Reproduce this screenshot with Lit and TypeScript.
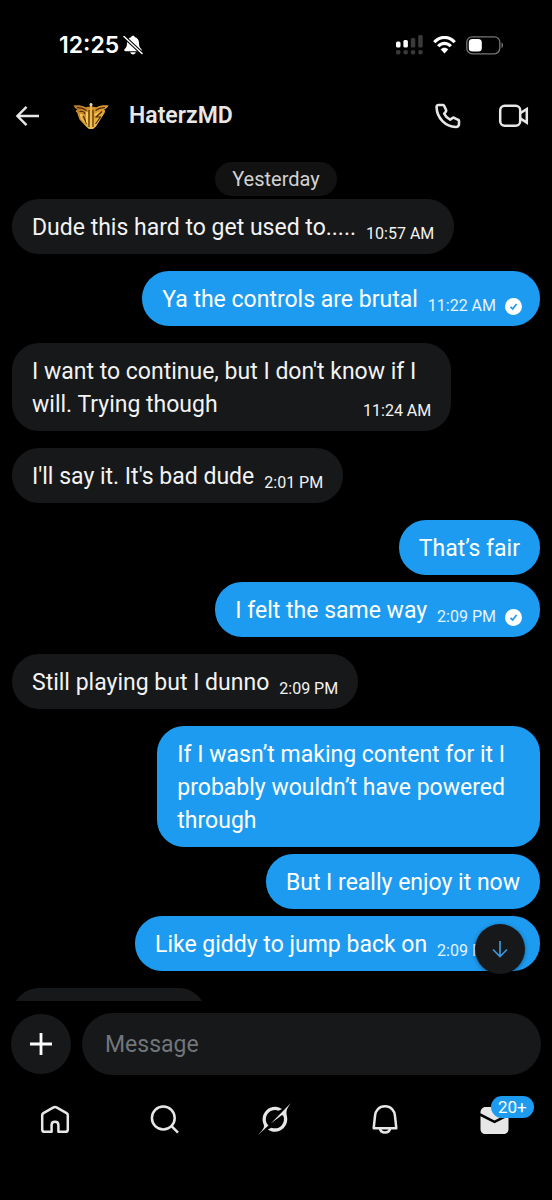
import { LitElement, html, css, svg, nothing } from "lit";
import { customElement, property } from "lit/decorators.js";
import { classMap } from "lit/directives/class-map.js";

interface Message {
  lines: string[];
  mine?: boolean;
  time?: string;
  seen?: boolean;
  joined?: boolean;
}

const MESSAGES: Message[] = [
  { lines: ["Dude this hard to get used to....."], time: "10:57 AM" },
  { lines: ["Ya the controls are brutal"], time: "11:22 AM", mine: true, seen: true },
  { lines: ["I want to continue, but I don't know if I", "will. Trying though"], time: "11:24 AM" },
  { lines: ["I'll say it. It's bad dude"], time: "2:01 PM" },
  { lines: ["That’s fair"], mine: true },
  { lines: ["I felt the same way"], time: "2:09 PM", mine: true, seen: true, joined: true },
  { lines: ["Still playing but I dunno"], time: "2:09 PM" },
  { lines: ["If I wasn’t making content for it I", "probably wouldn’t have powered", "through"], mine: true },
  { lines: ["But I really enjoy it now"], mine: true, joined: true },
  { lines: ["Like giddy to jump back on"], time: "2:09 PM", mine: true, seen: true, joined: true },
];

@customElement("status-bar")
export class StatusBar extends LitElement {
  static styles = css`
    :host {
      display: flex;
      justify-content: space-between;
      align-items: center;
      height: 90px;
      box-sizing: border-box;
      padding: 0 48px 0 59px;
      color: #fff;
      font: 600 23px/26px Inter, sans-serif;
    }
    .clock, .system { display: flex; align-items: center; }
    .clock { gap: 4px; }
    .system { gap: 10px; }
    svg { display: block; }
  `;
  render() {
    return html`
      <div class="clock">
        <span>12:25</span>
        <svg width="20" height="20" viewBox="0 0 20 20">
          <path fill="#fff" d="M10 .8c-1 0-1.600.6-1.800 1.300C5.400 3 4 5.200 4 8c0 3.600-.9 4.600-2.300 6-.9.9-.4 2.200.8 2.200h15c1.200 0 1.700-1.300.8-2.200C16.900 12.600 16 11.600 16 8c0-2.800-1.400-5-4.200-5.900C11.600 1.400 11 .8 10 .8zM7.200 17.300c.4 1.300 1.400 2.100 2.800 2.100s2.400-.8 2.800-2.100z"/>
          <path stroke="#000" stroke-width="3.600" d="M1 1.500 18.500 18"/>
          <path stroke="#fff" stroke-width="1.500" stroke-linecap="round" d="M1 1.500 19 18.500"/>
        </svg>
      </div>
      <div class="system">
        <svg width="27" height="20" viewBox="0 0 27 20">
          <g fill="#fff"><rect y="6.500" width="4.500" height="6" rx="1.500"/><rect x="7.400" y="5" width="4.500" height="7.500" rx="1.500"/></g>
          <g fill="#3a3a3a"><rect x="14.800" y="3" width="4.500" height="9.500" rx="1.500"/><rect x="22.200" width="4.500" height="12.500" rx="1.500"/>
          <rect y="15" width="4.500" height="4.500" rx="2"/><rect x="7.400" y="15" width="4.500" height="4.500" rx="2"/><rect x="14.800" y="15" width="4.500" height="4.500" rx="2"/><rect x="22.200" y="15" width="4.500" height="4.500" rx="2"/></g>
        </svg>
        <svg width="23" height="18" viewBox="0 0 23 18" fill="none" stroke="#fff" stroke-width="3.200">
          <path d="M1.300 6.200C7-.2 16-.2 21.700 6.200"/>
          <path d="M5.200 10.300c3.600-4 9-4 12.600 0"/>
          <path fill="#fff" stroke="none" d="M11.500 17.400 7.600 13.300c2.200-2.200 5.600-2.200 7.800 0z"/>
        </svg>
        <svg width="38" height="19" viewBox="0 0 38 19">
          <rect x=".8" y=".8" width="33" height="17" rx="5.500" fill="none" stroke="#767676" stroke-width="1.300"/>
          <rect x="2.800" y="3" width="13" height="12.600" rx="3.500" fill="#fff"/>
          <path fill="#767676" d="M35.500 6.500c2 .8 2 4.800 0 5.600z"/>
        </svg>
      </div>`;
  }
}

@customElement("chat-header")
export class ChatHeader extends LitElement {
  static styles = css`
    :host {
      display: flex;
      align-items: center;
      box-sizing: border-box;
      height: 50px;
      padding: 2px 22px 0 14px;
      color: #e7e7e7;
    }
    button {
      display: block;
      padding: 0;
      border: 0;
      background: none;
      color: inherit;
    }
    svg { display: block; }
    .avatar { margin-left: 31px; }
    h1 {
      flex: 1;
      margin: 0 0 0 20px;
      font: 600 23px/28px Roboto, sans-serif;
    }
    .calls { display: flex; align-items: center; gap: 36px; }
  `;
  render() {
    return html`
      <button aria-label="Back">
        <svg width="28" height="28" viewBox="0 0 28 28" fill="none" stroke="currentColor" stroke-width="2.400">
          <path d="M25 14H4M12.500 4.800 3.400 14l9.100 9.200"/>
        </svg>
      </button>
      <svg class="avatar" width="36" height="28" viewBox="0 0 36 28">
        <defs><linearGradient id="gold" x1="0" y1="0" x2="1" y2="1">
          <stop offset="0" stop-color="#b4762a"/><stop offset=".5" stop-color="#d99a2c"/><stop offset=".75" stop-color="#f0bd50"/><stop offset="1" stop-color="#8d5416"/>
        </linearGradient></defs>
        <path fill="url(#gold)" d="M.5 3.500C5 3 9 3.500 12.500 5.200L17 4.500V2h2v2.500l4.500.7C27 3.500 31 3 35.500 3.500 34.500 5.500 33 7 31 7.800c1.500.7 1.200 1.700.5 3.200L23 24.500 20 27h-4l-3-2.500-6.500-7L4 10.500C2 9.500 3 8 4.500 7.500 2.500 6.500 1.200 5.200.500 3.500z"/>
        <path fill="none" stroke="#4a2809" stroke-width="1.100" d="M4 5.600c4-.2 7 .9 9.500 2.900M32 5.600c-4-.2-7 .9-9.500 2.900M6.500 9.500c2.500-.5 5 .5 5.500 2.500M29 9.500l-6 5.500h4.500l-5 7M16 8v17M20 8v17M10.500 14l3 8"/>
        <path fill="#f6c95a" d="m6.500 11.500 3.500 1-1.500 3 5 6.500-5.500-5zM21 12l6-2.500-4.500 4.500zM13 10h2v13l-2-3zM17.300 1.500h1.400V25h-1.400z"/>
        <circle cx="18" cy="2.500" r="1.500" fill="#e9d9b0"/>
      </svg>
      <h1>HaterzMD</h1>
      <div class="calls">
        <button aria-label="Audio call">
          <svg width="28" height="28" viewBox="0 0 28 28" fill="none" stroke="currentColor" stroke-width="2.600" stroke-linejoin="round">
            <path d="M4.200 3h4.600c.6 0 1 .3 1.300.8l2 4.200c.2.500.1 1-.2 1.400l-1.700 2.400c1.300 2.700 3.200 4.600 5.900 5.900l2.600-1.800c.4-.3.900-.3 1.400-.1l4.100 2c.5.200.8.700.8 1.200v3c0 2-1.300 3.100-3.200 3C11.500 24.500 3 16.300 2.600 5.400 2.500 4.200 3 3.200 4.200 3z"/>
          </svg>
        </button>
        <button aria-label="Video call">
          <svg width="32" height="28" viewBox="0 0 32 28" fill="none" stroke="currentColor" stroke-width="2.500">
            <rect x="2.200" y="3.800" width="20" height="20" rx="4.500"/>
            <path d="M22.200 11.200 28.800 7v13.600l-6.600-4.200"/>
          </svg>
        </button>
      </div>`;
  }
}

@customElement("chat-bubble")
export class ChatBubble extends LitElement {
  @property({ attribute: false }) message!: Message;
  static styles = css`
    :host { display: flex; }
    .bubble {
      box-sizing: border-box;
      min-height: 55px;
      padding: 12px 20px 10px;
      border-radius: 27px;
      background: #16181a;
      color: #f2f2f2;
      font: 400 23px/33px Roboto, sans-serif;
    }
    .mine { margin-left: auto; background: #1d9bf0; color: #fff; }
    .seen { padding-right: 18px; }
    .line { display: flex; justify-content: space-between; gap: 10px; white-space: nowrap; }
    .multi .text { padding-right: 15px; }
    .meta {
      display: flex;
      align-items: center;
      align-self: flex-end;
      gap: 9px;
      height: 20px;
      font-size: 16px;
      line-height: 20px;
    }
    .seen .meta { color: #e3f3ff; }
    svg { display: block; }
  `;
  render() {
    const m = this.message;
    const last = m.lines.length - 1;
    return html`<div class=${classMap({ bubble: true, mine: !!m.mine, seen: !!m.seen, multi: last > 0 })}>
      ${m.lines.map((text, i) => html`<div class="line">
        <span class="text">${text}</span>
        ${i === last && m.time ? html`<span class="meta"><time>${m.time}</time>${m.seen ? this.tick() : nothing}</span>` : nothing}
      </div>`)}
    </div>`;
  }
  private tick() {
    return html`<svg width="17" height="17" viewBox="0 0 17 17" role="img" aria-label="Seen">
      <circle cx="8.500" cy="8.500" r="8.500" fill="#fff"/>
      <path d="m5.500 8.800 2.200 2.200 3.800-5" fill="none" stroke="#1d9bf0" stroke-width="1.700"/>
    </svg>`;
  }
}

@customElement("chat-composer")
export class ChatComposer extends LitElement {
  static styles = css`
    :host { display: flex; align-items: center; gap: 11px; padding: 12px 11px 0; }
    button {
      display: grid;
      place-items: center;
      flex: none;
      width: 60px;
      height: 60px;
      padding: 0;
      border: 0;
      border-radius: 50%;
      background: #16181a;
      color: #fff;
    }
    label { display: flex; flex: 1; min-width: 0; }
    input {
      flex: 1;
      min-width: 0;
      height: 62px;
      box-sizing: border-box;
      padding: 0 23px;
      border: 0;
      border-radius: 31px;
      outline: 0;
      background: #16181a;
      color: #f2f2f2;
      font: 400 23px/33px Roboto, sans-serif;
    }
    input::placeholder { color: #71767b; opacity: 1; }
  `;
  render() {
    return html`
      <button aria-label="Add attachment">
        <svg width="24" height="24" viewBox="0 0 24 24" fill="none" stroke="currentColor" stroke-width="2.800"><path d="M12 1v22M1 12h22"/></svg>
      </button>
      <label><input type="text" placeholder="Message" aria-label="Message" /></label>`;
  }
}

const NAV = [
  { label: "Home", icon: svg`<path fill="none" stroke="currentColor" stroke-width="2.500" stroke-linejoin="round" d="M14.500 5.300 4.400 11.100c-.8.500-1.200 1.200-1.200 2.100v14.200c0 1.400 1 2.400 2.400 2.400h7V23c0-4.300 6.800-4.300 6.800 0v6.800h7c1.400 0 2.400-1 2.400-2.400V13.200c0-.9-.4-1.600-1.200-2.100L17.500 5.300c-1.100-.6-1.900-.6-3 0z"/>` },
  { label: "Search", icon: svg`<g fill="none" stroke="currentColor" stroke-width="2.500"><circle cx="14.300" cy="16" r="11.400"/><path d="m22.500 24.200 6.500 6.500"/></g>` },
  { label: "Grok", icon: svg`<path fill="currentColor" d="M11.745 21.540l10.970-8.190c.539-.4 1.307-.244 1.564.38 1.349 3.288.746 7.241-1.938 9.955-2.683 2.714-6.417 3.310-9.830 1.954l-3.728 1.745c5.347 3.697 11.840 2.782 15.898-1.324 3.219-3.255 4.216-7.692 3.284-11.693-1.351-5.878.332-8.227 3.782-13.031L32 1l-4.540 4.590L11.743 21.544m-2.263 1.987c-3.837-3.707-3.175-9.446.1-12.755 2.420-2.449 6.388-3.448 9.852-1.979l3.720-1.737c-.67-.49-1.530-1.017-2.515-1.387-4.455-1.854-9.789-.931-13.410 2.728-3.483 3.523-4.579 8.940-2.697 13.561 1.405 3.454-.899 5.898-3.220 8.364L-1 33l10.478-9.466"/>` },
  { label: "Notifications", icon: svg`<g fill="none" stroke="currentColor" stroke-width="2.500"><path stroke-linejoin="round" d="M16 4.200c-5.900 0-9.700 4.300-10 9.800L4.700 26.200h22.600L26 14c-.3-5.500-4.100-9.800-10-9.800z"/><path d="M11 26.500c.7 5.400 9.300 5.400 10 0"/></g>` },
  { label: "Messages", badge: "20+", icon: svg`<path fill="currentColor" d="M1.500 10.500C1.500 7.500 3.500 5 6.500 5h18c3 0 5 2.500 5 5.500v.8l-14 7.200L1.500 11.300zM1.500 14.300l14 7 14-7V27c0 3-2 5-5 5h-18c-3 0-5-2-5-5z"/>` },
];

@customElement("tab-bar")
export class TabBar extends LitElement {
  static styles = css`
    :host { display: block; padding: 17px 2px 54px 0; color: #e7e7e7; }
    nav { display: grid; grid-template-columns: repeat(5, 1fr); }
    a {
      display: flex;
      justify-content: center;
      padding: 10px 0;
      color: inherit;
      text-decoration: none;
    }
    .icon { position: relative; }
    svg { display: block; overflow: visible; }
    .badge {
      position: absolute;
      left: 12px;
      top: -6px;
      padding: 0 7px;
      border-radius: 11px;
      background: #1d9bf0;
      color: #fff;
      font: 400 17px/22px Roboto, sans-serif;
    }
  `;
  render() {
    return html`<nav>
      ${NAV.map((n) => html`<a href="#" aria-label=${n.label}>
        <span class="icon">
          <svg width="32" height="34" viewBox="0 0 32 34">${n.icon}</svg>
          ${n.badge ? html`<span class="badge">${n.badge}</span>` : nothing}
        </span>
      </a>`)}
    </nav>`;
  }
}

@customElement("app-root")
export class AppRoot extends LitElement {
  static styles = css`
    :host {
      display: flex;
      flex-direction: column;
      height: 100vh;
      background: #000;
      overflow: hidden;
    }
    main { position: relative; display: flex; flex: 1; min-height: 0; }
    .thread {
      display: flex;
      flex: 1;
      flex-direction: column;
      overflow: hidden;
      padding: 22px 12px 0;
    }
    .day {
      align-self: center;
      padding: 0 17px;
      border-radius: 17px;
      background: #121212;
      color: #d2d2d2;
      font: 400 20px/34px Roboto, sans-serif;
    }
    chat-bubble { flex: none; margin-top: 17px; }
    .day + chat-bubble { margin-top: 3px; }
    .joined { margin-top: 7px; }
    .upcoming {
      flex: none;
      width: 194px;
      height: 55px;
      margin-top: 17px;
      border-radius: 27px;
      background: #16181a;
    }
    .jump {
      position: absolute;
      right: 27px;
      bottom: 27px;
      display: grid;
      place-items: center;
      width: 50px;
      height: 50px;
      padding: 0;
      border: 0;
      border-radius: 50%;
      background: #16181a;
      color: #3c97d8;
      box-shadow: 0 1px 4px rgba(0, 0, 0, 0.4);
    }
  `;
  render() {
    return html`
      <status-bar></status-bar>
      <chat-header></chat-header>
      <main>
        <div class="thread">
          <span class="day">Yesterday</span>
          ${MESSAGES.map((m) => html`<chat-bubble class=${classMap({ joined: !!m.joined })} .message=${m}></chat-bubble>`)}
          <div class="upcoming"></div>
        </div>
        <button class="jump" aria-label="Jump to latest">
          <svg width="18" height="18" viewBox="0 0 18 18" fill="none" stroke="currentColor" stroke-width="1.700"><path d="M9 1v15M2 9.500l7 7 7-7"/></svg>
        </button>
      </main>
      <chat-composer></chat-composer>
      <tab-bar></tab-bar>`;
  }
}
